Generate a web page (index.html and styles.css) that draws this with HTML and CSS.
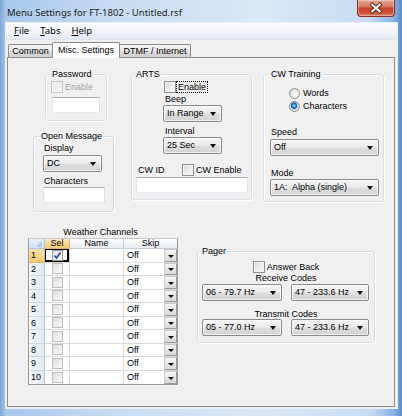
FILE: index.html
```html
<!DOCTYPE html>
<html>
<head>
<meta charset="utf-8">
<title>Menu Settings for FT-1802</title>
<link rel="stylesheet" href="styles.css">
</head>
<body>
<div class="window">
  <div class="titlebar">
    <span class="title">Menu Settings for FT-1802 - Untitled.rsf</span>
    <div class="close">
      <svg width="38" height="17" viewBox="0 0 38 17">
        <path d="M15 4.5 L23 11.5 M23 4.5 L15 11.5" stroke="#5a1d12" stroke-width="4" stroke-linecap="square" fill="none"/>
        <path d="M15 4.5 L23 11.5 M23 4.5 L15 11.5" stroke="#ffffff" stroke-width="2.2" stroke-linecap="square" fill="none"/>
      </svg>
    </div>
  </div>
  <div class="client">
    <div class="menubar">
      <span class="menu"><u>F</u>ile</span>
      <span class="menu"><u>T</u>abs</span>
      <span class="menu"><u>H</u>elp</span>
    </div>
    <div class="tabstrip">
      <div class="tab tab-common">Common</div>
      <div class="tab tab-misc active">Misc. Settings</div>
      <div class="tab tab-dtmf">DTMF / Internet</div>
    </div>
    <div class="panel">
      <div class="toprow">
        <div class="col1">
          <div class="group g-pass">
            <span class="gtitle">Password</span>
            <div class="chkrow pass-row disabled"><span class="cb cb-dis"></span><span class="cbtext">Enable</span></div>
            <div class="textbox tb-pass"></div>
          </div>
          <div class="group g-open">
            <span class="gtitle t-open">Open Message</span>
            <span class="lbl l-display">Display</span>
            <div class="combo c-dc"><span>DC</span><i class="arrow"></i></div>
            <span class="lbl l-chars">Characters</span>
            <div class="textbox tb-chars"></div>
          </div>
        </div>
        <div class="group g-arts">
          <span class="gtitle t-arts">ARTS</span>
          <div class="chkrow arts-row"><span class="cb"></span><span class="focus">Enable</span></div>
          <span class="lbl l-arts l-beep">Beep</span>
          <div class="combo c-arts"><span>In Range</span><i class="arrow"></i></div>
          <span class="lbl l-arts l-interval">Interval</span>
          <div class="combo c-arts"><span>25 Sec</span><i class="arrow"></i></div>
          <div class="chkrow cw-row"><span class="cwid">CW ID</span><span class="cb"></span><span class="cbtext">CW Enable</span></div>
          <div class="textbox tb-cwid"></div>
        </div>
        <div class="group g-cw">
          <span class="gtitle t-cw">CW Training</span>
          <div class="chkrow radio-row r1"><span class="radio"></span><span class="rtext">Words</span></div>
          <div class="chkrow radio-row r2"><span class="radio checked"></span><span class="rtext">Characters</span></div>
          <span class="lbl l-cw l-speed">Speed</span>
          <div class="combo c-cw"><span>Off</span><i class="arrow"></i></div>
          <span class="lbl l-cw l-mode">Mode</span>
          <div class="combo c-cw c-mode"><span>1A:&nbsp; Alpha (single)</span><i class="arrow"></i></div>
        </div>
      </div>
      <div class="bottomrow">
        <div class="weather">
          <div class="wlabel">Weather Channels</div>
          <div class="dgv">
            <div class="corner"><i class="tri"></i></div>
            <div class="ch ch-sel">Sel</div>
            <div class="ch">Name</div>
            <div class="ch ch-last">Skip</div>

            <div class="rh rh-cur">1</div>
            <div class="cell sel cur"><span class="gcb checked"><svg width="9" height="9" viewBox="0 0 9 9"><path d="M1.5 4.5 L3.5 7 L7.5 1.5" stroke="#2a3fb0" stroke-width="1.6" fill="none"/></svg></span></div>
            <div class="cell"></div>
            <div class="cell skip"><span>Off</span><span class="dbtn"><i class="arrow"></i></span></div>

            <div class="rh">2</div>
            <div class="cell sel"><span class="gcb"></span></div>
            <div class="cell"></div>
            <div class="cell skip"><span>Off</span><span class="dbtn"><i class="arrow"></i></span></div>

            <div class="rh">3</div>
            <div class="cell sel"><span class="gcb"></span></div>
            <div class="cell"></div>
            <div class="cell skip"><span>Off</span><span class="dbtn"><i class="arrow"></i></span></div>

            <div class="rh">4</div>
            <div class="cell sel"><span class="gcb"></span></div>
            <div class="cell"></div>
            <div class="cell skip"><span>Off</span><span class="dbtn"><i class="arrow"></i></span></div>

            <div class="rh">5</div>
            <div class="cell sel"><span class="gcb"></span></div>
            <div class="cell"></div>
            <div class="cell skip"><span>Off</span><span class="dbtn"><i class="arrow"></i></span></div>

            <div class="rh">6</div>
            <div class="cell sel"><span class="gcb"></span></div>
            <div class="cell"></div>
            <div class="cell skip"><span>Off</span><span class="dbtn"><i class="arrow"></i></span></div>

            <div class="rh">7</div>
            <div class="cell sel"><span class="gcb"></span></div>
            <div class="cell"></div>
            <div class="cell skip"><span>Off</span><span class="dbtn"><i class="arrow"></i></span></div>

            <div class="rh">8</div>
            <div class="cell sel"><span class="gcb"></span></div>
            <div class="cell"></div>
            <div class="cell skip"><span>Off</span><span class="dbtn"><i class="arrow"></i></span></div>

            <div class="rh">9</div>
            <div class="cell sel"><span class="gcb"></span></div>
            <div class="cell"></div>
            <div class="cell skip"><span>Off</span><span class="dbtn"><i class="arrow"></i></span></div>

            <div class="rh last">10</div>
            <div class="cell sel last"><span class="gcb"></span></div>
            <div class="cell last"></div>
            <div class="cell skip last"><span>Off</span><span class="dbtn"><i class="arrow"></i></span></div>
          </div>
        </div>
        <div class="group g-pager">
          <span class="gtitle t-pager">Pager</span>
          <div class="chkrow answer-row"><span class="cb"></span><span class="cbtext">Answer Back</span></div>
          <span class="lbl l-center">Receive Codes</span>
          <div class="comborow">
            <div class="combo c-p1"><span>06 - 79.7 Hz</span><i class="arrow"></i></div>
            <div class="combo c-p2"><span>47 - 233.6 Hz</span><i class="arrow"></i></div>
          </div>
          <span class="lbl l-center l-transmit">Transmit Codes</span>
          <div class="comborow comborow2">
            <div class="combo c-p1"><span>05 - 77.0 Hz</span><i class="arrow"></i></div>
            <div class="combo c-p2"><span>47 - 233.6 Hz</span><i class="arrow"></i></div>
          </div>
        </div>
      </div>
    </div>
  </div>
</div>
</body>
</html>
```

FILE: styles.css
```css
* { box-sizing: border-box; }
html, body { margin: 0; padding: 0; }
body {
  width: 402px;
  height: 416px;
  overflow: hidden;
  font-family: "Liberation Sans", Arial, sans-serif;
  font-size: 9px;
  color: #000;
  background: #fff;
}

.window {
  width: 402px;
  height: 416px;
  display: flex;
  flex-direction: column;
  background:
    linear-gradient(to right, #7ea7d8 0, #a9c8ec 1.5%, #c9dcf2 30%, #dbe8f7 65%, #c8dcf3 92%, #85b3e8 98%, #5a8cc6 100%);
}

/* title bar */
.titlebar {
  height: 23px;
  display: flex;
  align-items: flex-start;
  flex-shrink: 0;
}
.title {
  font-family: "Noto Sans", "Open Sans", sans-serif;
  font-size: 9.5px;
  line-height: 12px;
  margin: 7px 0 0 7px;
  color: #1e1e1e;
}
.close {
  margin-left: auto;
  margin-right: 7px;
  width: 38px;
  height: 17px;
  border: 1px solid #8a3222;
  border-top: 0;
  border-radius: 0 0 4px 4px;
  background: linear-gradient(#e9a595, #d77b66 40%, #c4432b 52%, #cd5338 80%, #e0836a);
  box-shadow: inset 0 0 0 1px rgba(255,255,255,0.35);
  display: flex;
  align-items: center;
  justify-content: center;
}
.close svg { display: block; }

/* client */
.client {
  flex: 1;
  margin: 0 5px 8px 6px;
  display: flex;
  flex-direction: column;
  background: #f0f0f0;
  box-shadow: 0 0 0 1px #e9eff7;
}
.menubar {
  height: 17px;
  flex-shrink: 0;
  display: flex;
  align-items: center;
  padding-left: 3px;
  background: linear-gradient(#fdfdfe, #f4f6fb 45%, #e4e9f4);
  border-bottom: 1px solid #dde3ee;
  font-family: "Noto Sans", "Open Sans", sans-serif;
  font-size: 9.5px;
}
.menu { padding: 0 5px; line-height: 12px; }
.menu + .menu { margin-left: 1px; }
.menu u { text-decoration-thickness: 1px; text-underline-offset: 1px; }

.tabstrip {
  height: 17px;
  flex-shrink: 0;
  display: flex;
  align-items: flex-end;
  padding-left: 2px;
}
.tab {
  height: 13px;
  line-height: 12px;
  text-align: center;
  white-space: nowrap;
  border: 1px solid #898c95;
  border-bottom: 0;
  border-radius: 2px 2px 0 0;
  background: linear-gradient(#f3f3f3, #ebebeb 50%, #dddddd 51%, #cfcfcf);
  margin-right: -1px;
}
.tab-common { width: 45px; }
.tab-misc { width: 68px; }
.tab-dtmf { width: 72px; }
.tab.active {
  height: 16px;
  line-height: 14px;
  margin-bottom: -1px;
  background: #fff;
  position: relative;
  z-index: 1;
}

.panel {
  flex: 1;
  margin: 0 2px 1px 1px;
  border: 1px solid #898c95;
  background: #f0f0f0;
  padding: 16px 0 0 20px;
  display: flex;
  flex-direction: column;
  align-items: flex-start;
}

/* groups */
.group {
  border: 1px solid #d5dfe5;
  border-radius: 3px;
  box-shadow: inset 1px 1px 0 #fff, 1px 1px 0 #fff;
  display: flex;
  flex-direction: column;
  align-items: flex-start;
  flex-shrink: 0;
}
.gtitle {
  margin: -7px 0 0 5px;
  padding: 0 1px;
  line-height: 13px;
  background: #f0f0f0;
  white-space: nowrap;
}
.lbl { line-height: 11px; white-space: nowrap; }

.toprow {
  display: flex;
  align-items: flex-start;
  margin-left: 5px;
}
.col1 { width: 81px; display: flex; flex-direction: column; align-items: flex-start; }

.g-pass { margin-left: 12px; width: 62px; height: 47px; }
.chkrow { display: flex; align-items: center; height: 12px; white-space: nowrap; }
.pass-row { margin-left: 5px; }
.disabled { color: #a0a0a0; }
.cbtext { margin-left: 2px; line-height: 11px; }
.tb-pass { margin: 4px 0 0 6px; width: 48px; height: 16px; }

.g-open { margin-top: 15px; width: 81px; height: 76px; }
.t-open { margin-left: 6px; }
.l-display { margin-left: 10px; }
.c-dc { margin: 1px 0 0 9px; width: 59px; }
.l-chars { margin: 4px 0 0 10px; }
.tb-chars { margin-left: 9px; width: 62px; height: 16px; }

.g-arts { margin-left: 17px; width: 121px; height: 126px; }
.t-arts { margin-left: 3px; }
.arts-row { margin-left: 32px; }
.focus {
  border: 1px dotted #000;
  padding: 0 1px;
  line-height: 10px;
}
.l-arts { margin-left: 33px; }
.l-beep { margin-top: 1px; }
.l-interval { margin-top: 4px; }
.c-arts { margin-left: 31px; width: 59px; }
.cw-row { margin: 10px 0 0 6px; }
.cwid { width: 44px; line-height: 11px; }
.tb-cwid { margin: 1px 0 0 4px; width: 112px; height: 16px; }

.g-cw { margin-left: 11px; width: 121px; height: 128px; }
.t-cw { margin-left: 6px; }
.radio-row { margin-left: 25px; }
.r1 { margin-top: 6px; }
.r2 { margin-top: 1px; }
.rtext { margin-left: 3px; line-height: 11px; }
.l-cw { margin-left: 7px; }
.l-speed { margin-top: 15px; }
.l-mode { margin-top: 12px; }
.c-cw { margin: 1px 0 0 6px; width: 109px; }
.c-mode { margin-top: 0; height: 18px; }

/* controls */
.textbox {
  background: #fff;
  border: 1px solid;
  border-color: #abadb3 #dbdfe6 #e3e9ef #e2e3ea;
}
.combo {
  height: 17px;
  border: 1px solid #8a8a8a;
  border-radius: 2px;
  background: linear-gradient(#f4f4f4, #ececec 48%, #dedede 52%, #d3d3d3);
  box-shadow: inset 0 0 0 1px rgba(255,255,255,0.7);
  display: flex;
  align-items: center;
  justify-content: space-between;
  padding: 0 5px 0 3px;
  line-height: 11px;
  white-space: nowrap;
  flex-shrink: 0;
}
.arrow {
  display: block;
  width: 0;
  height: 0;
  border-left: 3.5px solid transparent;
  border-right: 3.5px solid transparent;
  border-top: 4px solid #111;
}
.cb {
  width: 12px;
  height: 12px;
  flex-shrink: 0;
  border: 1px solid #8e8f8f;
  background: linear-gradient(135deg, #d3d5d8, #f0f1f2 60%, #fbfbfb);
  box-shadow: inset 0 0 0 1px #f4f4f4;
}
.cb-dis {
  border-color: #c4c4c4;
  background: linear-gradient(135deg, #e6e6e6, #f6f6f6);
}
.radio {
  width: 11px;
  height: 11px;
  flex-shrink: 0;
  border: 1px solid #8e8f8f;
  border-radius: 50%;
  background: radial-gradient(circle at 65% 65%, #fdfdfd 0, #e6e6e6 60%, #cfcfcf 100%);
}
.radio.checked {
  background: radial-gradient(circle at 45% 40%, #9fdcff 0, #3b8fdc 1.6px, #125bab 3px, #dcdcdc 3.6px, #f3f3f3 100%);
}

/* bottom row */
.bottomrow {
  display: flex;
  align-items: flex-start;
  margin-top: 14px;
}
.weather { width: 150px; }
.wlabel {
  line-height: 12px;
  text-align: center;
  padding-right: 5px;
  white-space: nowrap;
}
.dgv {
  display: grid;
  grid-template-columns: 16px 25px 54px 53px;
  grid-template-rows: 10px repeat(10, 13.5px);
  border: 1px solid #9a9a9a;
  border-top-color: #c8c8c8;
  background: #fff;
  width: 150px;
}
.corner {
  background: linear-gradient(#e5eefa, #d2e0f2);
  border-right: 1px solid #b3c3d9;
  border-bottom: 1px solid #b3c3d9;
  display: flex;
  align-items: flex-end;
  justify-content: flex-end;
  padding: 0 2px 1px 0;
}
.tri {
  display: block;
  width: 0;
  height: 0;
  border-left: 6px solid transparent;
  border-bottom: 6px solid #b4c8e2;
}
.ch {
  background: linear-gradient(#ffffff, #f3f5f8 50%, #e7ebf1);
  border-right: 1px solid #c5cdd8;
  border-bottom: 1px solid #c5cdd8;
  text-align: center;
  line-height: 9px;
}
.ch-sel { background: linear-gradient(#fdeccb, #fad794 50%, #f7c974); border-color: #e0b56a; }
.ch-last { border-right: 0; }
.rh {
  background: linear-gradient(to right, #f4f7fb, #e3eaf4);
  border-right: 1px solid #b3c3d9;
  border-bottom: 1px solid #cbd6e6;
  padding-left: 2px;
  display: flex;
  align-items: center;
  line-height: 10px;
}
.rh-cur { background: linear-gradient(#fde3ad, #f7c96f); border-bottom-color: #e0b56a; }
.cell {
  border-right: 1px solid #d9d9d9;
  border-bottom: 1px solid #d9d9d9;
  display: flex;
  align-items: center;
}
.cell.last, .rh.last { border-bottom: 0; }
.sel { justify-content: center; }
.sel.cur { box-shadow: inset 1px 1px 0 #000, inset -2px -2px 0 #000; }
.gcb {
  width: 11px;
  height: 11px;
  border: 1px solid #bdbdbd;
  background: linear-gradient(135deg, #dedede, #f2f2f2 70%, #fafafa);
  display: flex;
  align-items: center;
  justify-content: center;
}
.gcb.checked { border-color: #9a9a9a; background: linear-gradient(135deg, #e4e4e4, #fbfbfb); }
.gcb svg { display: block; }
.skip {
  border-right: 0;
  justify-content: space-between;
  padding-left: 3px;
  line-height: 10px;
}
.dbtn {
  width: 13px;
  height: 100%;
  border: 1px solid #c9c9c9;
  border-right-color: #9a9a9a;
  border-bottom-color: #9a9a9a;
  background: linear-gradient(#f6f6f6, #e6e6e6 50%, #d8d8d8);
  display: flex;
  align-items: center;
  justify-content: center;
  padding-top: 2px;
}
.dbtn .arrow { border-left-width: 3px; border-right-width: 3px; border-top-width: 3px; }

.g-pager { margin: 25px 0 0 19px; width: 178px; height: 92px; }
.t-pager { margin-left: 3px; }
.answer-row { align-self: center; margin-top: 3px; }
.l-center { align-self: stretch; text-align: center; }
.l-transmit { margin-top: 8px; }
.comborow { display: flex; gap: 9px; margin-left: 4px; }
.comborow2 { margin-top: -1px; }
.c-p1 { width: 80px; }
.c-p2 { width: 78px; }
```
